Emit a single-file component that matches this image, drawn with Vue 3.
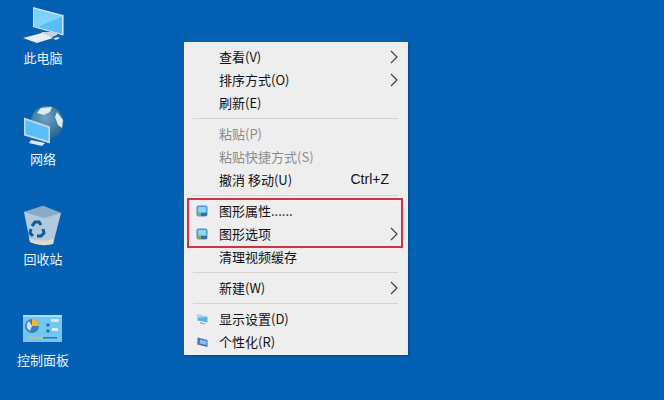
<script setup>
const rows = [
  { t: '查看(V)', arrow: true },
  { t: '排序方式(O)', arrow: true },
  { t: '刷新(E)' },
  { sep: true },
  { t: '粘贴(P)', off: true },
  { t: '粘贴快捷方式(S)', off: true },
  { t: '撤消 移动(U)', key: 'Ctrl+Z' },
  { sep: true },
  { t: '图形属性......', icon: 'gfx' },
  { t: '图形选项', icon: 'gfx', arrow: true },
  { t: '清理视频缓存' },
  { sep: true },
  { t: '新建(W)', arrow: true },
  { sep: true },
  { t: '显示设置(D)', icon: 'display' },
  { t: '个性化(R)', icon: 'person' },
]
</script>

<template>
  <div class="desktop">
    <div class="icons">
      <div class="dicon">
        <svg width="46" height="46" viewBox="0 0 46 46">
          <path d="M13 5 L43 13 V33.5 L13 25 Z" fill="#cfe0ef"/>
          <path d="M14 7 L42 14.5 V32 L14 24 Z" fill="#58bdf7"/>
          <path d="M14 7 L42 14.5 L18 25 L14 24 Z" fill="#7fd2fb"/>
          <path d="M43 13 L44 12.5 V33 L43 33.5 Z" fill="#8fa7bd"/>
          <path d="M22 30 L37 30 L37 33 L30 36 L20 33 Z" fill="#c3d2de"/>
          <path d="M3 36 L22 31 L33 36 L17 41 Z" fill="#e9eef3"/>
          <path d="M33 36.5 L38 35 L40 36 L36 38 Z" fill="#dbe4ec"/>
        </svg>
        <span>此电脑</span>
      </div>
      <div class="dicon">
        <svg width="46" height="46" viewBox="0 0 46 46">
          <defs>
            <radialGradient id="globe" cx="0.45" cy="0.35" r="0.7">
              <stop offset="0" stop-color="#6fa5c4"/>
              <stop offset="1" stop-color="#1f5f8c"/>
            </radialGradient>
          </defs>
          <circle cx="27" cy="19.5" r="16.5" fill="url(#globe)"/>
          <path d="M21 5 L32 4 L30 9 L24 12 L17 10 Z" fill="#dceaf2"/>
          <path d="M37 9 L43 17 L42 25 L38 22 L35 14 Z" fill="#dceaf2"/>
          <path d="M4 14.5 L30 23.5 V40.5 L4 32.5 Z" fill="#c5d6e4"/>
          <path d="M5.5 17 L28.5 25 V38 L5.5 31 Z" fill="#58bff8"/>
          <path d="M11 37 L25 40 L22 43 L9 40 Z" fill="#e4eaef"/>
        </svg>
        <span>网络</span>
      </div>
      <div class="dicon">
        <svg width="46" height="46" viewBox="0 0 46 46">
          <path d="M4 9 L23 3 L41 10 L33 41 Q20 44 10 39 Z" fill="#b3c9dc"/>
          <path d="M4 9 L23 3 L41 10 L24 15 Z" fill="#8aa9c4"/>
          <path d="M9 35 Q20 40 34 36 L33 41 Q20 44 10 39 Z" fill="#e2d9cd"/>
          <g fill="none" stroke="#0f5a9e" stroke-width="3">
            <path d="M12 23 L15 19 H19 L21 22"/>
            <path d="M23 26 L24 30 L21 33 H17"/>
            <path d="M13 33 L10 30 L11 26"/>
          </g>
        </svg>
        <span>回收站</span>
      </div>
      <div class="dicon">
        <svg width="46" height="46" viewBox="0 0 46 46">
          <rect x="3" y="11" width="39" height="27" fill="#74c6f2"/>
          <rect x="3" y="11" width="39" height="2" fill="#aedff8"/>
          <circle cx="12" cy="22" r="7" fill="#3c7fb5"/>
          <path d="M12 15 A7 7 0 0 1 19 22 L12 22 Z" fill="#f5b92e"/>
          <path d="M9 17 A6 6 0 0 0 10 27 L12 22 Z" fill="#cfe0ec"/>
          <rect x="31" y="15" width="8" height="3" rx="1" fill="#e0e6d8"/>
          <circle cx="28" cy="21" r="1.8" fill="#2d6ea6"/>
          <circle cx="28" cy="27" r="1.8" fill="#2d6ea6"/>
          <rect x="32" y="24" width="6" height="3" fill="#d8eef9"/>
          <rect x="8" y="33" width="15" height="1.5" fill="#f0b93a"/>
          <rect x="23" y="33" width="14" height="1.5" fill="#2478bd"/>
        </svg>
        <span>控制面板</span>
      </div>
    </div>

    <div class="menu">
      <template v-for="(r, i) in rows" :key="i">
        <div v-if="r.sep" class="sep"></div>
        <div v-else class="row" :class="{ off: r.off }">
          <span class="gutter">
            <svg v-if="r.icon === 'gfx'" width="12" height="12" viewBox="0 0 12 12">
              <rect x="0.5" y="0.5" width="11" height="11" rx="2" fill="#3f9ad6"/>
              <rect x="2" y="2" width="8" height="5.5" fill="#8ed3ef"/>
              <path d="M1 8 H5 V11 H2 Z" fill="#8aa860"/>
              <path d="M5 8 H11 V10 L10 11 H5 Z" fill="#2f6fb0"/>
            </svg>
            <svg v-else-if="r.icon === 'display'" class="small" width="11" height="11" viewBox="0 0 11 11">
              <path d="M0.5 0.5 L10.5 3 V8.5 L0.5 6.5 Z" fill="#58b3e0"/>
              <path d="M0.5 0.5 L10.5 3 L0.5 4 Z" fill="#9ad6f0"/>
              <path d="M3 8 L9 9.5 L7 10.5 L3 9.5 Z" fill="#9bb2c4"/>
            </svg>
            <svg v-else-if="r.icon === 'person'" class="small" width="11" height="11" viewBox="0 0 11 11">
              <path d="M0.5 0.5 L10.5 3 V10 L0.5 7.5 Z" fill="#3f6fd0"/>
              <path d="M3 2.5 L9.5 4 V8 L3 6.5 Z" fill="#7cc4ea"/>
              <path d="M0.5 4 L3 4 L3 8 L0.5 7.5 Z" fill="#9060b0"/>
            </svg>
          </span>
          <span class="label">{{ r.t }}</span>
          <span v-if="r.key" class="key">{{ r.key }}</span>
          <svg v-if="r.arrow" class="arrow" width="8" height="14" viewBox="0 0 8 14">
            <path d="M1 1 L7 7 L1 13" fill="none" stroke="#3a3a3a" stroke-width="1.1"/>
          </svg>
        </div>
      </template>
      <div class="highlight"></div>
    </div>
  </div>
</template>

<style>
html, body { margin: 0; padding: 0; }
</style>

<style scoped>
.desktop {
  position: relative;
  width: 664px;
  height: 400px;
  overflow: hidden;
  background: #0360b3;
  font-family: "Noto Sans CJK SC", "Liberation Sans", sans-serif;
}
.icons {
  display: flex;
  flex-direction: column;
  width: 86px;
  padding-top: 2px;
}
.dicon {
  height: 100.6px;
  display: flex;
  flex-direction: column;
  align-items: center;
  color: #eaf4fb;
  font-size: 13px;
  line-height: 18px;
}
.dicon svg { display: block; height: 46px; flex: none; margin-bottom: 1px; filter: blur(0.4px); }
.menu {
  position: absolute;
  left: 184px;
  top: 42px;
  width: 224px;
  height: 313px;
  box-sizing: border-box;
  padding: 3.5px 0 1.5px;
  background: #eeeeee;
  color: #111111;
  font-size: 13px;
  box-shadow: 1px 1px 2px rgba(0, 20, 60, 0.35);
}
.row {
  display: flex;
  align-items: center;
  height: 23px;
  position: relative;
}
.row.off { color: #8c8c8c; }
.gutter {
  width: 35px;
  flex: none;
  display: flex;
  justify-content: flex-start;
  padding-left: 12px;
  box-sizing: border-box;
}
.gutter svg { display: block; }
.gutter .small { margin-left: 1px; }
.label { flex: 1; white-space: pre; padding-bottom: 2px; }
.key {
  margin-right: 19px;
  padding-bottom: 2px;
  font-family: "Liberation Sans", sans-serif;
  font-size: 14px;
}
.arrow { margin-right: 10px; }
.sep {
  height: 1px;
  margin: 3.5px 10px 3.5px 9px;
  background: #d4d4d4;
}
.highlight {
  position: absolute;
  left: 3px;
  top: 156px;
  width: 216px;
  height: 50px;
  box-sizing: border-box;
  border: 2px solid #d5323f;
  pointer-events: none;
}
</style>
